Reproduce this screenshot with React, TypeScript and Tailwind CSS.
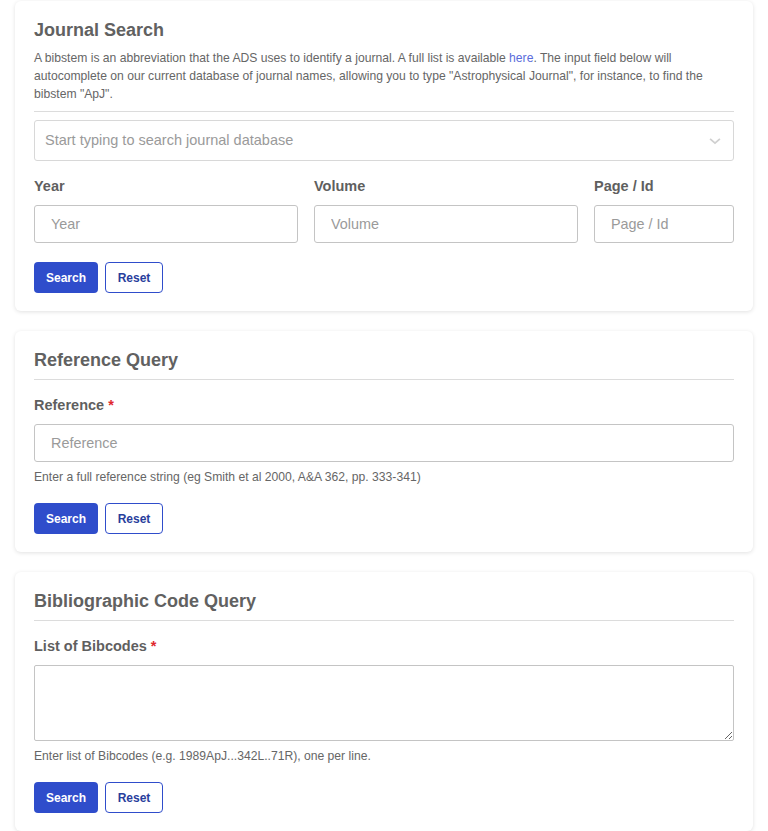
import { ReactNode } from "react";

function Card({ children }: { children: ReactNode }) {
  return (
    <section className="rounded-md bg-white px-[19px] pt-[15px] pb-[18px] shadow-[0_1px_4px_rgba(0,0,0,0.12)]">
      {children}
    </section>
  );
}

function Title({ children, className = "" }: { children: ReactNode; className?: string }) {
  return <h2 className={`text-[18px] leading-7 font-bold text-[#616161] ${className}`}>{children}</h2>;
}

function Label({ children, required }: { children: ReactNode; required?: boolean }) {
  return (
    <label className="block text-[14.5px] leading-5 font-bold text-[#5f5f5f]">
      {children}
      {required && <span className="ml-1 text-[#e0282e]">*</span>}
    </label>
  );
}

function TextInput({ placeholder }: { placeholder: string }) {
  return (
    <input
      type="text"
      placeholder={placeholder}
      className="block h-[38px] w-full rounded-[3px] border border-[#c4c4c4] bg-white px-4 text-[14.4px] text-[#444] outline-none placeholder:text-[#9a9a9a]"
    />
  );
}

function Buttons() {
  return (
    <div className="flex gap-[7px]">
      <button
        type="button"
        className="h-[31px] w-16 rounded-[4px] bg-[#2f4dcb] text-[12px] font-bold text-white"
      >
        Search
      </button>
      <button
        type="button"
        className="h-[31px] w-[58px] rounded-[4px] border border-[#2f4dcb] bg-white text-[12px] font-bold text-[#283e9c]"
      >
        Reset
      </button>
    </div>
  );
}

export default function App() {
  return (
    <div className="min-h-screen bg-white px-[15px] pt-px pb-5 font-['Liberation_Sans',Arial,sans-serif]">
      <div className="flex flex-col gap-5">
        <Card>
          <div className="border-b border-[#dcdcdc] pb-2">
            <Title>Journal Search</Title>
            <p className="mt-[5px] text-[12.15px] leading-[18px] text-[#666]">
              A bibstem is an abbreviation that the ADS uses to identify a journal. A full list is available{" "}
              <a href="#" className="text-[#5a6bdb]">here</a>. The input field below will autocomplete on our
              current database of journal names, allowing you to type "Astrophysical Journal", for instance, to
              find the bibstem "ApJ".
            </p>
          </div>

          <div className="mt-2 flex h-[41px] items-center justify-between rounded-[3px] border border-[#d8d8d8] pr-[11px] pl-[10px]">
            <span className="text-[14.5px] text-[#9a9a9a]">Start typing to search journal database</span>
            <svg width="14" height="14" viewBox="0 0 20 20" fill="none" stroke="#d0d0d0" strokeWidth="2.6">
              <path d="M3 7l7 6 7-6" />
            </svg>
          </div>

          <div className="mt-[15px] grid grid-cols-[264px_264px_1fr] gap-x-4 gap-y-[9px]">
            <Label>Year</Label>
            <Label>Volume</Label>
            <Label>Page / Id</Label>
            <TextInput placeholder="Year" />
            <TextInput placeholder="Volume" />
            <TextInput placeholder="Page / Id" />
          </div>

          <div className="mt-[19px]">
            <Buttons />
          </div>
        </Card>

        <Card>
          <Title className="border-b border-[#dcdcdc] pb-[5px]">Reference Query</Title>
          <div className="mt-[15px]">
            <Label required>Reference</Label>
          </div>
          <div className="mt-[9px]">
            <TextInput placeholder="Reference" />
          </div>
          <p className="mt-[7px] text-[12.15px] leading-4 text-[#666]">
            Enter a full reference string (eg Smith et al 2000, A&amp;A 362, pp. 333-341)
          </p>
          <div className="mt-[18px]">
            <Buttons />
          </div>
        </Card>

        <Card>
          <Title className="border-b border-[#dcdcdc] pb-[5px]">Bibliographic Code Query</Title>
          <div className="mt-[15px]">
            <Label required>List of Bibcodes</Label>
          </div>
          <textarea className="mt-[9px] block h-[76px] w-full rounded-[2px] border border-[#c4c4c4] bg-white px-3 py-2 text-[15px] outline-none" />
          <p className="mt-[7px] text-[12.15px] leading-4 text-[#666]">
            Enter list of Bibcodes (e.g. 1989ApJ...342L..71R), one per line.
          </p>
          <div className="mt-[18px]">
            <Buttons />
          </div>
        </Card>
      </div>
    </div>
  );
}
